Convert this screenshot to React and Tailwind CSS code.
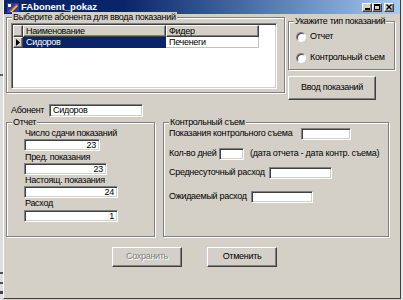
import React from 'react';

const etched = 'border border-[#808080] shadow-[1px_1px_0_#fff,inset_1px_1px_0_#fff]';
const sunken =
  'border border-t-[#808080] border-l-[#808080] border-b-white border-r-white shadow-[inset_1px_1px_0_#404040,inset_-1px_-1px_0_#d4d0c8]';
const raised =
  'border border-t-white border-l-white border-b-[#404040] border-r-[#404040] shadow-[inset_-1px_-1px_0_#808080]';

function Group({ title, className, children }) {
  return (
    <div className={`${etched} ${className}`}>
      <div className="-mt-[6px] ml-[5px] w-fit bg-[#d4d0c8] px-[1px] leading-[11px]">{title}</div>
      {children}
    </div>
  );
}

function Field({ value, className = '', left }) {
  return (
    <div
      className={`${sunken} flex h-[12px] items-center bg-white leading-none ${
        left ? 'justify-start pl-[3px]' : 'justify-end pr-[3px]'
      } ${className}`}
    >
      {value}
    </div>
  );
}

function Radio({ label, className = '' }) {
  return (
    <div className={`flex h-[12px] items-center gap-[4px] ${className}`}>
      <div className="h-[10px] w-[10px] rounded-full border border-t-[#808080] border-l-[#808080] border-b-white border-r-white bg-white shadow-[inset_1px_1px_0_#404040]" />
      <span>{label}</span>
    </div>
  );
}

function Button({ children, disabled, className = '' }) {
  return (
    <div className={`${raised} flex items-center justify-center ${className}`}>
      <span className={disabled ? 'text-[#808080] [text-shadow:1px_1px_0_#fff]' : ''}>{children}</span>
    </div>
  );
}

function TitleButton({ children, className = '' }) {
  return (
    <div className={`${raised} flex h-[9px] w-[10px] items-center justify-center bg-[#d4d0c8] ${className}`}>
      {children}
    </div>
  );
}

export default function App() {
  return (
    <div className="flex h-[300px] w-[403px] overflow-hidden whitespace-nowrap bg-[#d4d0c8] font-['Liberation_Sans',Arial,sans-serif] text-[9px] tracking-[-0.3px] text-black">
      {/* полоска слева */}
      <div className="flex h-full w-[3px] flex-col bg-[#dedede]">
        <div className="mt-[74px] h-[2px] w-[3px] bg-[#606060]" />
        <div className="mt-[196px] h-[2px] w-[3px] bg-[#505050]" />
        <div className="mt-[8px] h-[2px] w-[3px] bg-[#505050]" />
        <div className="mt-[7px] h-[3px] w-[3px] bg-[#404040]" />
      </div>

      {/* окно */}
      <div className="flex h-[299px] w-[398px] flex-col border-l border-b border-r border-l-white border-b-[#404040] border-r-[#404040]">
        {/* Заголовок */}
        <div className="flex h-[14px] items-center bg-linear-to-r from-[#0a246a] from-30% to-[#a6caf0]">
          <svg className="ml-[3px]" width="12" height="11" viewBox="0 0 12 11">
            <rect x="0" y="1" width="12" height="10" fill="#1c3cc8" />
            <path d="M1 10 L9 2 L11 3 L3 10 Z" fill="#f04010" />
            <path d="M3 10 L10 3 L11 4 L5 10 Z" fill="#ffd020" />
            <rect x="1" y="2" width="3" height="3" fill="#ffffff" />
          </svg>
          <span className="ml-[2px] text-[9.5px] leading-none font-bold tracking-normal text-white">FAbonent_pokaz</span>
          <div className="ml-auto mr-[6px] flex">
            <TitleButton>
              <div className="mt-[4px] h-[2px] w-[5px] bg-black" />
            </TitleButton>
            <TitleButton>
              <div className="h-[6px] w-[6px] border border-t-2 border-black" />
            </TitleButton>
            <TitleButton className="ml-[2px]">
              <svg width="6" height="6" viewBox="0 0 6 6">
                <path d="M0.5 0.5 L5.5 5.5 M5.5 0.5 L0.5 5.5" stroke="#000" strokeWidth="1.4" />
              </svg>
            </TitleButton>
          </div>
        </div>

        <div className="flex flex-col pl-[2px]">
          {/* Верхний ряд */}
          <div className="mt-[3px] flex items-start">
            <Group title="Выберите абонента для ввода показаний" className="h-[76px] w-[279px]">
              <div className={`${sunken} ml-[4px] h-[66px] w-[266px] bg-white p-[1px]`}>
                <div className="flex h-[12px]">
                  <div className={`${raised} h-[12px] w-[10px] bg-[#d4d0c8]`} />
                  <div className={`${raised} flex h-[12px] w-[143px] items-center bg-[#d4d0c8] pl-[2px] leading-none`}>
                    Наименование
                  </div>
                  <div className={`${raised} flex h-[12px] w-[93px] items-center bg-[#d4d0c8] pl-[2px] leading-none`}>
                    Фидер
                  </div>
                </div>
                <div className="flex h-[11px]">
                  <div className={`${raised} flex h-[11px] w-[10px] items-center justify-center bg-[#d4d0c8]`}>
                    <svg width="4" height="7" viewBox="0 0 4 7">
                      <path d="M0 0 L4 3.5 L0 7 Z" fill="#000" />
                    </svg>
                  </div>
                  <div className="flex h-[11px] w-[143px] items-center bg-[#0a246a] pl-[3px] leading-none text-white">
                    Сидоров
                  </div>
                  <div className="flex h-[11px] w-[93px] items-center border-r border-b border-[#c0c0c0] pl-[3px] leading-none">
                    Печенеги
                  </div>
                </div>
              </div>
            </Group>

            <div className="ml-[3px] mt-[4px] flex flex-col">
              <Group title="Укажите тип показаний" className="h-[49px] w-[107px]">
                <Radio label="Отчет" className="ml-[7px] mt-[4px]" />
                <Radio label="Контрольный съем" className="ml-[7px] mt-[9px]" />
              </Group>
              <Button className="mt-[6px] h-[24px] w-[88px]">Ввод показаний</Button>
            </div>
          </div>

          {/* Абонент */}
          <div className="mt-[4px] flex h-[13px] items-center pl-[5px]">
            <span className="w-[38px]">Абонент</span>
            <Field value="Сидоров" left className="h-[13px] w-[94px]" />
          </div>

          {/* Группы */}
          <div className="mt-[5px] flex">
            <Group title="Отчет" className="h-[115px] w-[149px]">
              <div className="flex flex-col pl-[17px]">
                <div className="ml-[1px] leading-[11px]">Число сдачи показаний</div>
                <Field value="23" className="w-[76px]" />
                <div className="ml-[1px] mt-[1px] leading-[11px]">Пред. показания</div>
                <Field value="23" className="w-[83px]" />
                <div className="ml-[1px] leading-[11px]">Настоящ. показания</div>
                <Field value="24" className="w-[94px]" />
                <div className="ml-[1px] leading-[11px]">Расход</div>
                <Field value="1" className="mt-[1px] w-[94px]" />
              </div>
            </Group>

            <Group title="Контрольный съем" className="ml-[8px] h-[115px] w-[226px]">
              <div className="flex flex-col pl-[5px]">
                <div className="flex h-[12px] items-center">
                  <span className="w-[132px]">Показания контрольного съема</span>
                  <Field value="" className="w-[50px]" />
                </div>
                <div className="mt-[8px] flex h-[12px] items-center">
                  <span className="w-[50px]">Кол-во дней</span>
                  <Field value="" className="w-[25px]" />
                  <span className="ml-[6px]">(дата отчета - дата контр. съема)</span>
                </div>
                <div className="mt-[7px] flex h-[12px] items-center">
                  <span className="w-[100px]">Среднесуточный расход</span>
                  <Field value="" className="w-[63px]" />
                </div>
                <div className="mt-[12px] flex h-[12px] items-center">
                  <span className="w-[82px]">Ожидаемый расход</span>
                  <Field value="" className="w-[62px]" />
                </div>
              </div>
            </Group>
          </div>

          {/* Кнопки */}
          <div className="mt-[10px] flex gap-[25px] pl-[106px]">
            <Button disabled className="h-[20px] w-[70px]">Сохранить</Button>
            <Button className="h-[20px] w-[70px]">Отменить</Button>
          </div>
        </div>
      </div>
      <div className="h-full w-[2px] bg-[#e8e8e8]" />
    </div>
  );
}
